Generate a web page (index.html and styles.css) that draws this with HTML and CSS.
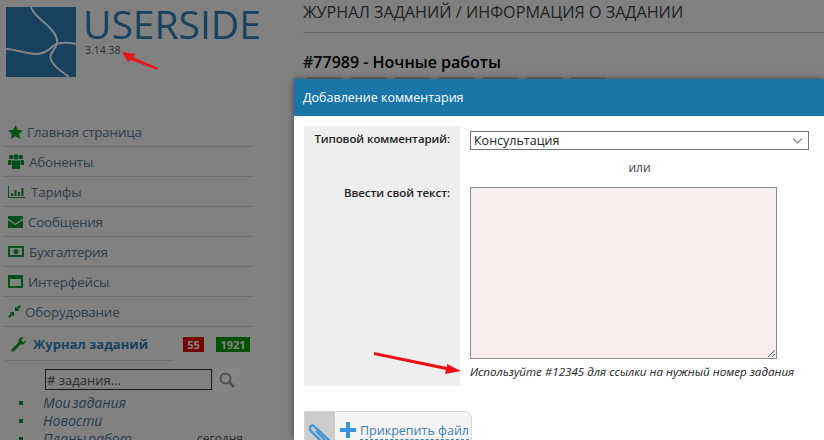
FILE: index.html
```html
<!DOCTYPE html>
<html lang="ru">
  <head>
    <meta charset="UTF-8" />
    <title>USERSIDE</title>
    <link rel="stylesheet" href="styles.css">
  </head>
  <body>
    <div class="page">
      <div class="sidebar">
        <div class="brand">
          <svg class="logo" width="70" height="70" viewBox="0 0 70 70">
            <rect width="70" height="70" fill="#2c7db7" />
            <g fill="none" stroke="#fff" stroke-width="2">
              <path d="M25 0C27 8 38 14 45 22C51 29 53 34 50 39C46 46 43 48 45 53C47 59 55 64 63 70" />
              <path d="M0 42C10 42 20 47 30 47C38 47 43 43 47 39C52 35 60 35 70 37" />
            </g>
          </svg>
          <div>
            <div class="brand-name">USERSIDE</div>
            <div class="version">3.14.38</div>
          </div>
        </div>

        <ul class="menu">
          <li>
            <svg class="ico" width="15" height="14" viewBox="0 0 15 14"><path d="M7.500 0l2.200 4.800 5.300.6-3.900 3.500 1.100 5.100-4.700-2.700L2.800 14l1.100-5.100L0 5.400l5.300-.6z" /></svg>
            Главная страница
          </li>
          <li>
            <svg class="ico" width="16" height="15" viewBox="0 0 16 15"><circle cx="3" cy="3" r="2.200" /><circle cx="8" cy="3" r="2.700" /><circle cx="13" cy="3" r="2.200" /><path d="M0 6h3.500v5H0zM12.500 6H16v5h-3.500zM4 6.500h8V15H4z" /></svg>
            <span class="gap-1">Абоненты</span>
          </li>
          <li>
            <svg class="ico" width="17" height="12" viewBox="0 0 17 12"><path d="M0 0h1v11h16v1H0zM3 7h2v3H3zM6.500 4h2v6h-2zM10 6h2v4h-2zM13.500 2h2v8h-2z" /></svg>
            <span class="gap-2">Тарифы</span>
          </li>
          <li>
            <svg class="ico" width="15" height="12" viewBox="0 0 15 12"><path d="M0 0h15v2.500L7.500 7.500 0 2.500zM0 4l7.500 5L15 4v8H0z" /></svg>
            <span class="gap-1">Сообщения</span>
          </li>
          <li>
            <svg class="ico" width="16" height="11" viewBox="0 0 16 11"><path fill-rule="evenodd" d="M0 0h16v11H0zM2 2v7h12V2zM8 3a2.500 2.500 0 1 1 0 5 2.500 2.500 0 0 1 0-5z" /></svg>
            <span class="gap-1">Бухгалтерия</span>
          </li>
          <li>
            <svg class="ico" width="15" height="13" viewBox="0 0 15 13"><path fill-rule="evenodd" d="M0 0h15v13H0zM2 4v7h11V4z" /></svg>
            <span class="gap-1">Интерфейсы</span>
          </li>
          <li>
            <svg class="ico" width="13" height="13" viewBox="0 0 13 13"><path d="M0 11.500l3-3-1.500-1.500H6v4.500L4.500 10l-3 3zM13 1.500l-3 3L11.500 6H7V1.500L8.500 3l3-3z" /></svg>
            <span>Оборудование</span>
          </li>
        </ul>

        <div class="tasks-row">
          <svg class="ico-wrench" width="15" height="15" viewBox="0 0 15 15"><path d="M15 3.500a4 4 0 0 1-5.300 3.800L3 14.300a1.600 1.600 0 0 1-2.300-2.200l7-6.800A4 4 0 0 1 12.800.400L10.500 2.700l.5 2 2 .5 1.800-2.300z" /></svg>
          <span class="tasks-title">Журнал заданий</span>
          <span class="badge badge-red">55</span>
          <span class="badge badge-green">1921</span>
        </div>

        <div class="search-row">
          <input class="search" type="text" placeholder="# задания..." />
          <span class="search-btn">
            <svg width="16" height="16" viewBox="0 0 16 16" fill="none" stroke="#9a9a9a" stroke-width="2"><circle cx="6.500" cy="6.500" r="5" /><path d="M10.500 10.500L15 15" stroke-width="3" /></svg>
          </span>
        </div>

        <ul class="submenu">
          <li>Мои задания</li>
          <li>Новости</li>
          <li>Планы работ <span class="today">сегодня</span></li>
        </ul>
      </div>

      <div class="content">
        <div class="page-title">ЖУРНАЛ ЗАДАНИЙ / ИНФОРМАЦИЯ О ЗАДАНИИ</div>
        <h1 class="task-title">#77989 - Ночные работы</h1>
        <div class="task-actions">
          <span class="task-btn"></span>
          <span class="task-btn"></span>
          <span class="task-btn"></span>
          <span class="task-btn"></span>
          <span class="task-btn"></span>
          <span class="task-btn"></span>
          <span class="task-btn"></span>
        </div>
      </div>
    </div>

    <div class="overlay"></div>

    <!-- Modal -->
    <div class="modal">
      <div class="modal-head">Добавление комментария</div>
      <div class="modal-body">
        <div class="form">
          <div class="labels">
            <div class="label label-first">Типовой комментарий:</div>
            <div class="label label-second">Ввести свой текст:</div>
          </div>
          <div class="fields">
            <div class="select">
              <span>Консультация</span>
              <svg width="11" height="6" viewBox="0 0 11 6" fill="none" stroke="#888" stroke-width="1.200"><path d="M1 .5l4.500 4.500L10 .5" /></svg>
            </div>
            <div class="or">или</div>
            <textarea class="comment-text"></textarea>
            <div class="hint">Используйте #12345 для ссылки на нужный номер задания</div>
          </div>
        </div>
        <div class="attach">
          <span class="attach-clip">
            <svg width="22" height="17" viewBox="0 0 22 17" fill="none" stroke="#3a94dd" stroke-width="2.200"><path d="M21 17L6 3C3 -1 -1 3 2 7L12 17" /><path d="M17 17L7 7" /></svg>
          </span>
          <span class="attach-link">
            <svg width="16" height="16" viewBox="0 0 16 16"><path fill="#3a94dd" d="M6 0h4v6h6v4h-6v6H6v-6H0V6h6z" /></svg>
            <span class="attach-text">Прикрепить файл</span>
          </span>
        </div>
      </div>
    </div>

    <!-- Arrows drawn over the screenshot -->
    <svg class="arrow arrow-version" width="37" height="19" viewBox="0 0 37 19"><path d="M0 0L14 2L11 5L36 16L35 18L9 8L6 10z" fill="#e8141c" /></svg>
    <svg class="arrow arrow-hint" width="88" height="24" viewBox="0 0 88 24"><path d="M0 1L73 16L73 13L87 20L71 23L72 19L0 4z" fill="#f00d14" /></svg>
  </body>
</html>
```

FILE: styles.css
```css
/* Reset CSS */
* {
  margin: 0;
  padding: 0;
  box-sizing: border-box;
}

html,
body {
  height: 100%;
  overflow: hidden;
}

body {
  font-family: "Open Sans", "Noto Sans", sans-serif;
  background-color: #f7f7f7;
  color: #222;
  position: relative;
}

.page {
  display: flex;
  height: 440px;
}

.sidebar {
  width: 294px;
  flex-shrink: 0;
  padding: 7px 0 0 3px;
}

.brand {
  display: flex;
  gap: 9px;
  padding-left: 3px;
  height: 110px;
}

.brand-name {
  margin: -3px 0 0 -2px;
  font-size: 39px;
  line-height: 40px;
  color: #2e7fb8;
}

.version {
  font-size: 10.500px;
  line-height: 14px;
  margin-top: -1px;
  color: #4d5f70;
}

.menu {
  list-style: none;
  width: 250px;
}

.menu li {
  display: flex;
  align-items: center;
  gap: 4px;
  height: 30px;
  padding-left: 5px;
  font-size: 13.500px;
  letter-spacing: -0.25px;
  color: #5a7a94;
  border-bottom: 1px solid #d8d8d8;
}

.ico {
  fill: #0f9a2c;
  flex-shrink: 0;
}

.gap-1 {
  margin-left: 1px;
}

.gap-2 {
  margin-left: 2px;
}

.tasks-row {
  position: relative;
  display: flex;
  align-items: center;
  height: 34px;
  padding-left: 8px;
}

.tasks-row::after {
  content: "";
  position: absolute;
  left: 2px;
  bottom: 0;
  width: 168px;
  height: 1px;
  background-color: #d8d8d8;
}

.ico-wrench {
  fill: #0f9a2c;
}

.tasks-title {
  margin-left: 7px;
  width: 150px;
  font-size: 13px;
  font-weight: 700;
  color: #2e7fb8;
}

.badge {
  height: 15px;
  line-height: 15px;
  font-size: 11px;
  font-weight: 700;
  text-align: center;
  color: #fff;
}

.badge-red {
  width: 21px;
  background-color: #e00000;
}

.badge-green {
  width: 34px;
  margin-left: 12px;
  background-color: #009a00;
}

.search-row {
  display: flex;
  align-items: center;
  margin-left: 42px;
  margin-top: 7px;
}

.search {
  width: 167px;
  height: 21px;
  padding-left: 1px;
  font-family: inherit;
  font-size: 13px;
  background-color: #f7f7f7;
  border: 1px solid #333;
}

.search::placeholder {
  color: #555;
}

.search-btn {
  display: flex;
  justify-content: center;
  align-items: center;
  width: 27px;
  height: 23px;
  margin-left: 1px;
  background-color: #fff;
}

.submenu {
  list-style: none;
  margin-top: 3px;
  margin-left: 17px;
  width: 240px;
}

.submenu li {
  position: relative;
  padding-left: 23px;
  height: 18px;
  line-height: 18px;
  font-size: 14px;
  word-spacing: -2px;
  font-style: italic;
  color: #4b7597;
}

.submenu li::before {
  content: "";
  position: absolute;
  left: -1px;
  top: 7px;
  width: 4px;
  height: 4px;
  background-color: #0f9a2c;
}

.today {
  position: absolute;
  right: 17px;
  font-size: 12px;
  font-style: normal;
  color: #555;
}

.content {
  flex: 1;
  padding: 2px 0 0 9px;
}

.page-title {
  height: 31px;
  font-size: 16.200px;
  line-height: 20px;
  color: #444;
  border-bottom: 1px solid #ccc;
}

.task-title {
  margin-top: 18px;
  font-size: 16px;
  line-height: 22px;
  font-weight: 600;
  color: #000;
}

.task-actions {
  display: flex;
  gap: 5px;
  margin: 4px 0 0 2px;
}

.task-btn {
  width: 39px;
  height: 10px;
  border-radius: 4px;
  background-color: #d4d4d4;
}

.overlay {
  position: absolute;
  inset: 0;
  background-color: rgba(0, 0, 0, 0.48);
}

.modal {
  position: absolute;
  left: 294px;
  top: 79px;
  width: 530px;
  height: 361px;
  background-color: #fff;
  box-shadow: 0 0 6px rgba(0, 0, 0, 0.5);
  overflow: hidden;
}

.modal-head {
  height: 37px;
  line-height: 37px;
  padding-left: 9px;
  font-size: 12.500px;
  color: #fff;
  background-color: #1a75a9;
}

.modal-body {
  padding: 10px 10px 0;
}

.form {
  display: flex;
}

.labels {
  width: 156px;
  height: 260px;
  padding-right: 10px;
  background-color: #eee;
  text-align: right;
  font-size: 11.500px;
  letter-spacing: -0.1px;
  font-weight: 600;
  white-space: nowrap;
  color: #222;
}

.label-first {
  padding-top: 5px;
}

.label-second {
  padding-top: 39px;
}

.fields {
  margin-left: 10px;
  padding-top: 5px;
}

.select {
  display: flex;
  justify-content: space-between;
  align-items: center;
  width: 339px;
  height: 19px;
  padding: 0 5px 0 3px;
  font-size: 12.500px;
  color: #222;
  border: 1px solid #767676;
}

.or {
  width: 339px;
  margin-top: 9px;
  height: 17px;
  line-height: 17px;
  text-align: center;
  font-size: 12px;
  color: #444;
}

.comment-text {
  display: block;
  width: 307px;
  height: 172px;
  margin-top: 11px;
  background-color: #f8eeee;
  border: 1px solid #8a8a8a;
}

.hint {
  margin-top: 5px;
  font-size: 11.600px;
  line-height: 16px;
  font-style: italic;
  white-space: nowrap;
  color: #222;
}

.attach {
  display: flex;
  width: 168px;
  height: 60px;
  margin-top: 25px;
  background-color: #f4f4f4;
  border: 1px solid #d5d5d5;
  border-radius: 0 8px 0 0;
}

.attach-clip {
  width: 30px;
  padding: 12px 0 0 4px;
  background-color: #ccc;
}

.attach-link {
  display: flex;
  align-items: flex-start;
  gap: 4px;
  padding: 10px 0 0 5px;
}

.attach-text {
  font-size: 12.500px;
  line-height: 17px;
  color: #3f7fb5;
  border-bottom: 1px dashed #3f7fb5;
}

.arrow {
  position: absolute;
}

.arrow-version {
  left: 122px;
  top: 52px;
}

.arrow-hint {
  left: 374px;
  top: 351px;
}
```
